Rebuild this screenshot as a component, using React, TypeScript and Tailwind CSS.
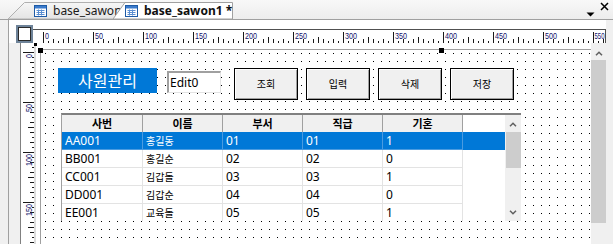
import React from "react";

const rows: string[][] = [
  ["AA001", "홍길동", "01", "01", "1"],
  ["BB001", "홍길순", "02", "02", "0"],
  ["CC001", "김갑돌", "03", "03", "1"],
  ["DD001", "김갑순", "04", "04", "0"],
  ["EE001", "교육돌", "05", "05", "1"],
];

const cols = [
  { t: "사번", w: "w-[81px]" },
  { t: "이름", w: "w-[80px]" },
  { t: "부서", w: "w-[80px]" },
  { t: "직급", w: "w-[80px]" },
  { t: "기혼", w: "w-[80px]" },
];

function FormIcon() {
  return (
    <svg width="13" height="12" viewBox="0 0 13 12" className="shrink-0">
      <rect x="0.5" y="0.5" width="12" height="11" fill="#ffffff" stroke="#1d5aa6" />
      <rect x="1" y="1" width="11" height="2.5" fill="#3b7bcc" />
      <path d="M2.5 5.5h8M2.5 7.5h8M2.5 9.5h8M4.5 4.5v6M7.5 4.5v6" stroke="#5b8fd2" strokeWidth="1" />
    </svg>
  );
}

function Chevron({ down }: { down?: boolean }) {
  return (
    <svg width="8" height="5" viewBox="0 0 8 5">
      <path d={down ? "M1 0.8 L4 3.8 L7 0.8" : "M1 4.2 L4 1.2 L7 4.2"} stroke="#606060" strokeWidth="1.5" fill="none" />
    </svg>
  );
}

function HRuler() {
  const ticks: React.ReactNode[] = [];
  const labels: React.ReactNode[] = [];
  for (let u = 0; u <= 560; u += 5) {
    const x = 10 + u + 0.5;
    const h = u % 50 === 0 ? 11 : u % 25 === 0 ? 6 : u % 10 === 0 ? 4 : 2;
    ticks.push(<line key={u} x1={x} x2={x} y1={13 - h} y2={13} stroke="#1a1a1a" strokeWidth="1" />);
    if (u % 50 === 0) {
      const s = String(u);
      const last = u === 550;
      labels.push(
        <text
          key={"l" + u}
          x={10 + u + (last ? 1.5 : 2)}
          y={8.5}
          fontSize="8.5"
          fill="#10106a"
          fontFamily="'Liberation Sans', Arial, sans-serif"
          textLength={last ? 10 : s.length * 4}
          lengthAdjust="spacingAndGlyphs"
        >
          {s}
        </text>
      );
    }
  }
  return (
    <div className="w-[573px] h-[14px] border-t border-r border-[#505050] bg-white">
      <svg width="572" height="13" className="block">
        {ticks}
        {labels}
      </svg>
    </div>
  );
}

function VRuler() {
  const ticks: React.ReactNode[] = [];
  const labels: React.ReactNode[] = [];
  for (let v = -5; v <= 190; v += 5) {
    const y = 9 + v + 0.5;
    const a = Math.abs(v);
    const h = a % 50 === 0 ? 11 : a % 25 === 0 ? 6 : a % 10 === 0 ? 4 : 2;
    ticks.push(<line key={v} x1={13 - h} x2={13} y1={y} y2={y} stroke="#1a1a1a" strokeWidth="1" />);
    if (v >= 0 && v % 50 === 0) {
      const s = String(v);
      const ty = 9 + v + 2;
      labels.push(
        <text
          key={"l" + v}
          x={11}
          y={ty}
          fontSize="8.5"
          fill="#10106a"
          textAnchor="end"
          transform={`rotate(-90 11 ${ty})`}
          fontFamily="'Liberation Sans', Arial, sans-serif"
          textLength={s.length * 4}
          lengthAdjust="spacingAndGlyphs"
        >
          {s}
        </text>
      );
    }
  }
  return (
    <div className="w-[14px] h-full border-l border-[#808080] bg-white">
      <svg width="13" height="201" className="block">
        {ticks}
        {labels}
      </svg>
    </div>
  );
}

function Dots() {
  return (
    <svg className="absolute inset-0 w-full h-full" aria-hidden>
      <defs>
        <pattern id="dotgrid" x="4" y="3" width="8" height="8" patternUnits="userSpaceOnUse">
          <rect x="0" y="0" width="1" height="1" fill="#000000" />
        </pattern>
      </defs>
      <rect width="100%" height="100%" fill="url(#dotgrid)" />
    </svg>
  );
}

function Btn({ label }: { label: string }) {
  return (
    <div className="w-[64px] h-[32px] border border-black bg-[#f0f0f0] shadow-[inset_1px_1px_0_#ffffff,inset_-1px_-1px_0_#a0a0a0] flex items-center justify-center text-[10px] leading-none">
      {label}
    </div>
  );
}

function Grid() {
  return (
    <div className="relative mt-[13px] ml-[3px] w-[460px] h-[108px] overflow-hidden flex border-t-2 border-t-[#808080] border-l border-l-[#a0a0a0] bg-white">
      <div className="w-[443px] flex flex-col">
        <div className="flex h-[17px] shrink-0">
          {cols.map((c) => (
            <div
              key={c.t}
              className={`${c.w} h-full bg-[#f0f0f0] border-r border-[#a0a0a0] flex items-center justify-center text-[11px] font-bold leading-none`}
            >
              {c.t}
            </div>
          ))}
        </div>
        {rows.map((r, i) => (
          <div key={r[0]} className={`flex h-[18px] shrink-0 ${i === 0 ? "bg-[#0078d7] text-white" : ""}`}>
            {r.map((v, j) => (
              <div
                key={j}
                className={`${cols[j].w} h-full border-r border-b ${i === 0 ? "border-[#4a9be0]" : "border-[#e3e3e3]"} flex items-center pl-[3px] leading-none ${j === 1 ? "text-[10px]" : "text-[12px]"}`}
              >
                {v}
              </div>
            ))}
          </div>
        ))}
      </div>
      <div className="w-[16px] h-full bg-[#f0f0f0] flex flex-col items-center">
        <div className="mt-[7px] h-[5px] flex">
          <Chevron />
        </div>
        <div className="mt-[5px] w-[15px] h-[36px] bg-[#cdcdcd]" />
        <div className="mt-auto mb-[6px] h-[5px] flex">
          <Chevron down />
        </div>
      </div>
    </div>
  );
}

export default function App() {
  return (
    <div className="w-[613px] h-[244px] overflow-hidden bg-[#f0f0f0] font-['Noto_Sans','Noto_Sans_CJK_KR',sans-serif] text-black">
      {/* tab bar */}
      <div className="h-[20px] flex items-end border-b border-[#a0a0a0] bg-gradient-to-b from-[#f8f8f8] to-[#ededed]">
        <div className="relative ml-[8px] w-[122px] h-[17px] flex items-center pl-[26px] gap-[6px] overflow-hidden">
          <svg className="absolute inset-0" width="122" height="17" aria-hidden>
            <defs>
              <linearGradient id="t1" x1="0" y1="0" x2="0" y2="1">
                <stop offset="0" stopColor="#f6f6f6" />
                <stop offset="1" stopColor="#e4e4e4" />
              </linearGradient>
            </defs>
            <path d="M0 17 L16.5 0.5 L122 0.5 L122 17 Z" fill="url(#t1)" stroke="#b0b0b0" />
          </svg>
          <div className="relative flex items-center gap-[6px]">
            <FormIcon />
            <span className="text-[12px] leading-none whitespace-nowrap text-[#1a1a1a]">base_sawon</span>
          </div>
        </div>
        <div className="relative ml-[-17px] w-[120px] h-[17px] flex items-center pl-[12px]">
          <svg className="absolute inset-0" width="120" height="17" aria-hidden>
            <path d="M0 17 L12 0.5 L119.5 0.5 L119.5 17 Z" fill="#ffffff" stroke="#a0a0a0" />
          </svg>
          <div className="relative flex items-center gap-[6px]">
            <FormIcon />
            <span className="text-[12px] leading-none font-bold whitespace-nowrap text-[#101010]">base_sawon1 *</span>
          </div>
        </div>
        <div className="ml-auto h-full flex pr-[4px]">
          <svg width="9" height="5" viewBox="0 0 9 5" className="self-end mb-[2px]">
            <path d="M0.5 0.5 H8.5 L4.5 4.5 Z" fill="#000000" />
          </svg>
          <svg width="9" height="9" viewBox="0 0 9 9" className="self-start mt-[2px] ml-[5px]">
            <path d="M1 1 L8 8 M8 1 L1 8" stroke="#000000" strokeWidth="1.5" />
          </svg>
        </div>
      </div>

      {/* body */}
      <div className="h-[224px] flex">
        <div className="w-[9px] h-full border-r border-[#a0a0a0] bg-[#f0f0f0]" />
        <div className="w-[597px] h-full flex flex-col bg-white">
          {/* ruler row */}
          <div className="h-[23px] flex items-end pl-[7px]">
            <div className="w-[17px] h-[18px] border-2 border-[#6e8399] bg-white">
              <div className="w-full h-full border border-[#2a2a2a] bg-white" />
            </div>
            <HRuler />
          </div>
          {/* designer row */}
          <div className="h-[201px] flex">
            <div className="w-[11px] h-full bg-[#f0f0f0]" />
            <VRuler />
            <div className="relative w-[557px] h-full bg-white border-l-2 border-[#dcdcdc] pl-[4px] pt-[6px]">
              <div className="absolute left-[-2px] top-0 w-[3px] h-[3px] bg-black" />
              <div className="absolute left-[2px] top-[5px] w-[5px] h-[5px] bg-black z-10" />
              <div className="absolute left-[403px] top-[5px] w-[5px] h-[5px] bg-black z-10" />
              <div className="relative h-full border-l border-t border-[#a0a0a0] pl-[17px] pt-[18px]">
                <Dots />
                <div className="relative flex items-start">
                  <div className="w-[99px] h-[25px] bg-[#0078d7] text-white flex items-center justify-center text-[16px] leading-none">
                    사원관리
                  </div>
                  <div className="ml-[10px] mt-[3px] w-[54px] h-[22px] bg-white border-t-2 border-l-2 border-[#a0a0a0] border-r border-b border-r-[#e3e3e3] border-b-[#e3e3e3] flex items-center pl-[1px] text-[12px] leading-none">
                    Edit0
                  </div>
                  <div className="ml-[13px] flex gap-[8px]">
                    <Btn label="조회" />
                    <Btn label="입력" />
                    <Btn label="삭제" />
                    <Btn label="저장" />
                  </div>
                </div>
                <Grid />
              </div>
            </div>
            <div className="w-[15px] h-full bg-[#f0f0f0] flex flex-col items-center">
              <div className="mt-[8px] h-[5px] flex">
                <Chevron />
              </div>
              <div className="mt-[4px] w-[15px] h-[163px] bg-[#cdcdcd]" />
            </div>
          </div>
        </div>
        <div className="w-[7px] h-full bg-[#f0f0f0]" />
      </div>
    </div>
  );
}
